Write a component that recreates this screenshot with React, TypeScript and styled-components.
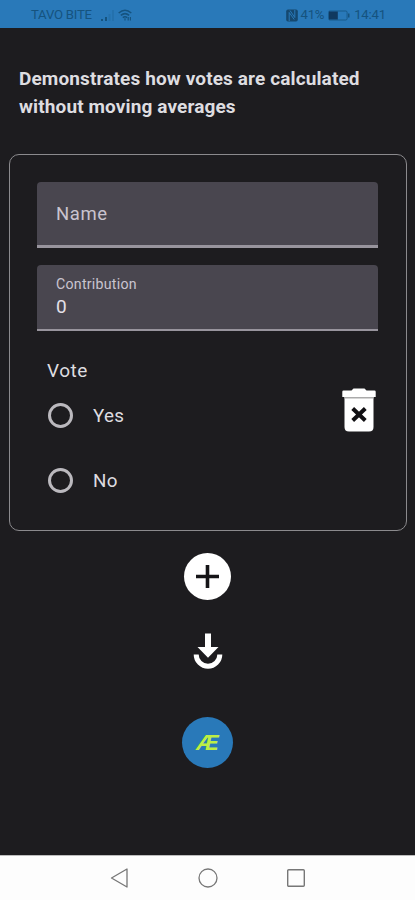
import React from "react";
import styled, { createGlobalStyle } from "styled-components";

const GlobalStyle = createGlobalStyle`
  * { box-sizing: border-box; }
  body { margin: 0; background: #1d1c1f; font-family: Roboto, "Liberation Sans", sans-serif; }
  svg { display: block; flex: none; }
`;

const Screen = styled.div`
  width: 415px;
  height: 900px;
  display: flex;
  flex-direction: column;
  background: #1d1c1f;
  color: #dedde0;
  overflow: hidden;
`;

const StatusBar = styled.header`
  height: 28px;
  flex: none;
  display: flex;
  justify-content: space-between;
  align-items: center;
  padding: 2px 29px 0 31px;
  background: #2979b9;
  color: #15537f;
  font-size: 13.2px;
  line-height: 16px;
`;

const StatusGroup = styled.div<{ $gap: number }>`
  display: flex;
  align-items: center;
  gap: ${(p) => p.$gap}px;
`;

const StatusText = styled.span<{ $spacing: number }>`
  letter-spacing: ${(p) => p.$spacing}px;
  white-space: nowrap;
`;

const Content = styled.main`
  flex: 1;
  display: flex;
  flex-direction: column;
  padding: 37px 9px 0;
`;

const Title = styled.h1`
  margin: 0 0 33px 10px;
  font-size: 19px;
  line-height: 28px;
  font-weight: 700;
  letter-spacing: 0.12px;
  color: #dedde0;
  white-space: nowrap;
`;

const Card = styled.section`
  height: 377px;
  width: 398px;
  padding: 27px;
  border: 1px solid #8b8a8d;
  border-radius: 10px;
`;

const Field = styled.div<{ $filled?: boolean }>`
  height: 66px;
  width: 341px;
  display: flex;
  flex-direction: column;
  padding: ${(p) => (p.$filled ? "10px 19px 0" : "21px 19px 0")};
  margin-bottom: 17px;
  background: #49464f;
  border-bottom: ${(p) => (p.$filled ? 2 : 3)}px solid #98949d;
  border-radius: 4px 4px 0 0;
`;

const Placeholder = styled.label`
  font-size: 18.5px;
  line-height: 22px;
  letter-spacing: 0.6px;
  color: #c9c4cf;
`;

const SmallLabel = styled.label`
  font-size: 14.2px;
  line-height: 19px;
  letter-spacing: 0.25px;
  color: #c9c4cf;
`;

const Value = styled.span`
  font-size: 19px;
  line-height: 25px;
  color: #e4e0e8;
`;

const VoteRow = styled.div`
  display: flex;
  justify-content: space-between;
  padding: 12px 3px 0 10px;
`;

const VoteGroup = styled.div`
  display: flex;
  flex-direction: column;
`;

const VoteTitle = styled.span`
  font-size: 19px;
  line-height: 22px;
  letter-spacing: 0.5px;
  margin-bottom: 11px;
`;

const Option = styled.label`
  display: flex;
  align-items: center;
  gap: 20px;
  height: 45px;
  margin-bottom: 20px;
  font-size: 18.8px;
  letter-spacing: 0.3px;
`;

const Radio = styled.span`
  width: 25px;
  height: 25px;
  margin-left: 1px;
  border: 3px solid #bbb9be;
  border-radius: 50%;
`;

const IconButton = styled.button`
  border: 0;
  padding: 0;
  background: transparent;
  color: #fff;
`;

const DeleteButton = styled(IconButton)`
  align-self: flex-start;
  margin-top: 28px;
`;

const Actions = styled.div`
  display: flex;
  flex-direction: column;
  align-items: center;
  padding-top: 22px;
`;

const AddButton = styled(IconButton)`
  width: 47px;
  height: 47px;
  margin-bottom: 1px;
  display: grid;
  place-items: center;
  border-radius: 50%;
  background: #fff;
  color: #151417;
`;

const DownloadButton = styled(IconButton)`
  margin: 32px 0 47px;
`;

const Brand = styled.div`
  width: 51px;
  height: 51px;
  display: grid;
  place-items: center;
  border-radius: 50%;
  background: #2979b9;
  color: #bcee45;
  font: italic 700 22.5px/24px "Liberation Sans", sans-serif;
`;

const NavBar = styled.nav`
  height: 45px;
  flex: none;
  display: flex;
  align-items: center;
  justify-content: center;
  gap: 68px;
  border-top: 1px solid #bdbdbd;
  background: #fdfdfd;
`;

const SignalIcon = () => (
  <svg width="15" height="13" viewBox="0 0 15 13" fill="currentColor">
    <path d="M1 10h2v2H1zM5 8h2v4H5z" />
    <path d="M8.5 5h2v7h-2zM12 1h2v11h-2z" opacity=".2" />
  </svg>
);

const WifiIcon = () => (
  <svg width="14" height="13" viewBox="0 0 14 13" fill="none" stroke="currentColor" strokeWidth="1.5">
    <path d="M.7 4Q7-1.6 13.3 4M2.8 6.4q4.2-3.6 8.4 0M4.8 8.7q2.2-1.8 4.4 0" />
    <path d="M7 9.2v2.4M10.2 8v3.6M12.4 8v3.6" strokeWidth="1.2" />
  </svg>
);

const NfcIcon = () => (
  <svg width="12" height="13" viewBox="0 0 12 13">
    <rect x=".2" y=".5" width="11.600" height="12" rx="1.800" fill="#15486f" />
    <path d="M3.200 12V3.500l5 7M4 1.500l4.800 7V1" fill="none" stroke="#2979b9" strokeWidth="1" />
  </svg>
);

const BatteryIcon = () => (
  <svg width="22" height="11" viewBox="0 0 22 11">
    <rect x=".6" y="1" width="18.500" height="9" rx="1.300" fill="none" stroke="currentColor" strokeWidth=".8" />
    <path d="M1 1.500h8.800v8H1z" fill="#10395f" />
    <path d="M20 3.500h1.500v4H20z" fill="currentColor" />
  </svg>
);

const TrashIcon = () => (
  <svg width="34" height="44" viewBox="0 0 34 44">
    <path d="M1.500 2.500h8L11.500.5h11l2 2h8q1.200 0 1.200 1.200V9H.3V3.700Q.3 2.500 1.500 2.500z" fill="#fff" />
    <path d="M2.500 9h29v30q0 4.500-4.500 4.500H7q-4.500 0-4.500-4.500z" fill="#fff" />
    <path d="M2.500 9h29v1.500h-29z" fill="#aaa" />
    <path d="m10.700 20.500 12.600 12m0-12L10.700 32.500" stroke="#111013" strokeWidth="4" />
  </svg>
);

const PlusIcon = () => (
  <svg width="47" height="47" viewBox="0 0 47 47">
    <path d="M23.500 12v23M12 23.500h23" stroke="currentColor" strokeWidth="3.600" />
  </svg>
);

const DownloadIcon = () => (
  <svg width="30" height="37" viewBox="0 0 30 37">
    <path d="M12 .5h6V14h7.500L15 24.700 4.500 14H12z" fill="currentColor" />
    <path d="M3.200 21.500a11.800 11.800 0 0 0 23.600 0" fill="none" stroke="currentColor" strokeWidth="5" />
  </svg>
);

const BackIcon = () => (
  <svg width="20" height="22" viewBox="0 0 20 22" fill="none" stroke="#777" strokeWidth="1.300">
    <path d="M17 2v18L1.500 11z" strokeLinejoin="round" />
  </svg>
);

const HomeIcon = () => (
  <svg width="20" height="20" viewBox="0 0 20 20" fill="none" stroke="#777" strokeWidth="1.300">
    <circle cx="10" cy="10" r="9" />
  </svg>
);

const RecentIcon = () => (
  <svg width="20" height="20" viewBox="0 0 20 20" fill="none" stroke="#777" strokeWidth="1.400">
    <rect x="1.700" y="1.700" width="16.600" height="16.600" rx="1" />
  </svg>
);

export default function App() {
  return (
    <>
      <GlobalStyle />
      <Screen>
        <StatusBar>
          <StatusGroup $gap={8}>
            <StatusText $spacing={-0.25}>TAVO BITE</StatusText>
            <StatusGroup $gap={3}>
              <SignalIcon />
              <WifiIcon />
            </StatusGroup>
          </StatusGroup>
          <StatusGroup $gap={4}>
            <StatusGroup $gap={3}>
              <NfcIcon />
              <StatusText $spacing={-0.3}>41%</StatusText>
            </StatusGroup>
            <BatteryIcon />
            <StatusText $spacing={-0.2}>14:41</StatusText>
          </StatusGroup>
        </StatusBar>
        <Content>
          <Title>
            Demonstrates how votes are calculated
            <br />
            without moving averages
          </Title>
          <Card>
            <Field>
              <Placeholder>Name</Placeholder>
            </Field>
            <Field $filled>
              <SmallLabel>Contribution</SmallLabel>
              <Value>0</Value>
            </Field>
            <VoteRow>
              <VoteGroup>
                <VoteTitle>Vote</VoteTitle>
                <Option>
                  <Radio />
                  Yes
                </Option>
                <Option>
                  <Radio />
                  No
                </Option>
              </VoteGroup>
              <DeleteButton aria-label="Delete">
                <TrashIcon />
              </DeleteButton>
            </VoteRow>
          </Card>
          <Actions>
            <AddButton aria-label="Add">
              <PlusIcon />
            </AddButton>
            <DownloadButton aria-label="Download">
              <DownloadIcon />
            </DownloadButton>
            <Brand>Æ</Brand>
          </Actions>
        </Content>
        <NavBar>
          <BackIcon />
          <HomeIcon />
          <RecentIcon />
        </NavBar>
      </Screen>
    </>
  );
}
